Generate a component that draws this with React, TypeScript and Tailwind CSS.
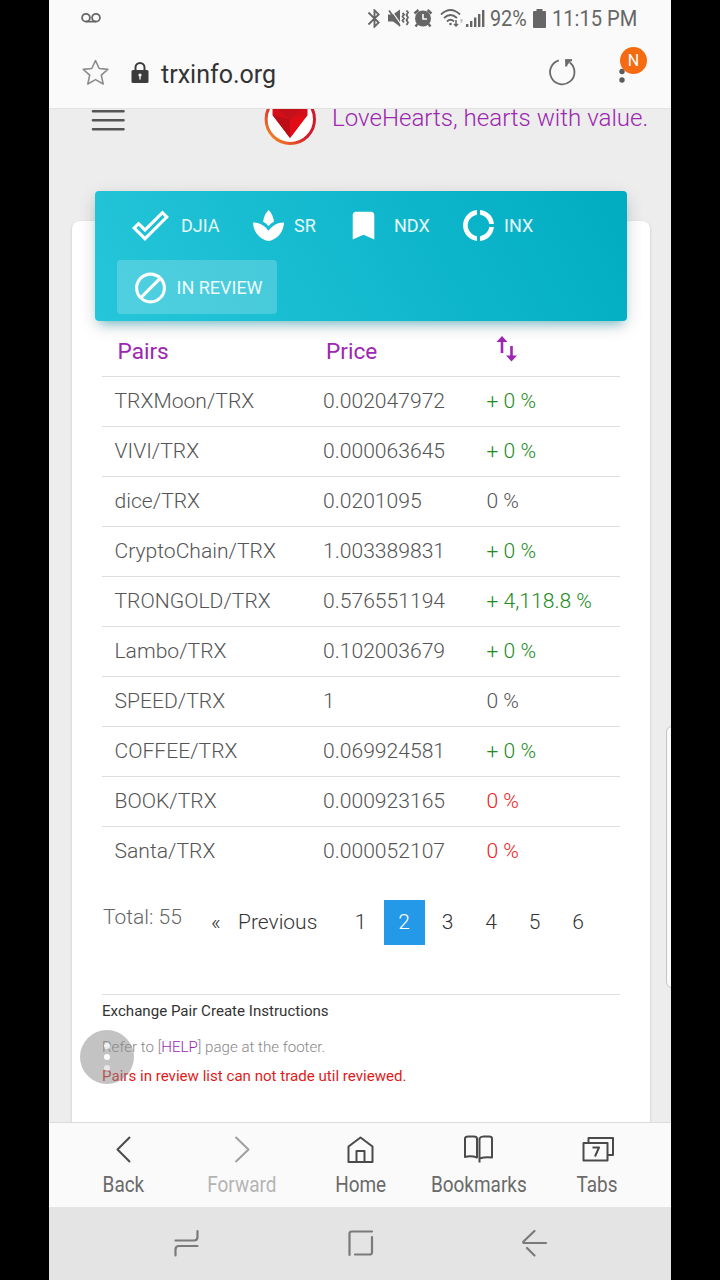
import type { ReactNode } from "react";
import clsx from "clsx";
import { MdBluetooth, MdBookmark, MdDonutLarge, MdDoneOutline, MdSpa } from "react-icons/md";

const pairs = [
    { name: "TRXMoon/TRX", price: "0.002047972", change: "+ 0 %", trend: "up" },
    { name: "VIVI/TRX", price: "0.000063645", change: "+ 0 %", trend: "up" },
    { name: "dice/TRX", price: "0.0201095", change: "0 %", trend: "flat" },
    { name: "CryptoChain/TRX", price: "1.003389831", change: "+ 0 %", trend: "up" },
    { name: "TRONGOLD/TRX", price: "0.576551194", change: "+ 4,118.8 %", trend: "up" },
    { name: "Lambo/TRX", price: "0.102003679", change: "+ 0 %", trend: "up" },
    { name: "SPEED/TRX", price: "1", change: "0 %", trend: "flat" },
    { name: "COFFEE/TRX", price: "0.069924581", change: "+ 0 %", trend: "up" },
    { name: "BOOK/TRX", price: "0.000923165", change: "0 %", trend: "down" },
    { name: "Santa/TRX", price: "0.000052107", change: "0 %", trend: "down" },
];

function StatusBar() {
    return (
        <div className="flex h-9 items-center pl-[32px] pr-[33px] text-[#666]">
            <svg width="20" height="12" viewBox="0 0 20 12" fill="none" stroke="currentColor" strokeWidth="1.8">
                <circle cx="5" cy="5.7" r="3.9" />
                <circle cx="15" cy="5.7" r="3.9" />
                <path d="M5 9.6h10" />
            </svg>
            <div className="ml-auto flex items-center">
                <MdBluetooth className="h-[23px] w-[23px] stroke-current" />
                <svg className="ml-[2px]" width="21" height="20" viewBox="0 0 21 20" fill="currentColor">
                    <path d="M0 6.500h5L12 1.500v17l-7-5H0z" />
                    <path d="M3 2l10.500 15" stroke="#fafafa" strokeWidth="1.3" />
                    <path d="M1 2.500l11 15.500" stroke="currentColor" strokeWidth="1.6" />
                    <path
                        d="M14.500 5l1.500 1.500-1.500 2 1.500 2-1.500 2 1.500 2M18.500 2.500l1.500 2-1.500 2.500 1.500 2.500-1.500 2.500 1.500 2.500-1.500 2.500"
                        fill="none"
                        stroke="currentColor"
                        strokeWidth="1.8"
                    />
                </svg>
                <svg className="ml-[4px]" width="20" height="20" viewBox="0 0 20 20">
                    <circle cx="10" cy="10.5" r="8" fill="currentColor" />
                    <path d="M1.500 5.500l4-3.500M18.500 5.500l-4-3.500M4.500 16l-2 2.500M15.500 16l2 2.500" stroke="currentColor" strokeWidth="2.4" />
                    <path d="M10 6v5h4" fill="none" stroke="#fafafa" strokeWidth="1.6" />
                </svg>
                <svg className="ml-[7px]" width="24" height="20" viewBox="0 0 24 20" fill="none" stroke="currentColor" strokeWidth="1.8">
                    <path d="M1 6.500q9.500-9 19 0M4 10q6.500-6 13 0M7 13.500q3.500-3.500 7 0" />
                    <circle cx="10.5" cy="16" r="1.3" fill="currentColor" stroke="none" />
                    <path d="M16 12v6M14 16l2 2 2-2" strokeWidth="1.5" />
                    <path d="M21.500 15v-4M20 12.500h3" opacity=".35" strokeWidth="1.3" />
                </svg>
                <svg className="ml-[1px]" width="20" height="20" viewBox="0 0 20 20" fill="currentColor">
                    <path d="M1 16h2.400v3H1zM5 13h2.400v6H5zM9 9.500h2.400V19H9zM13 6h2.400v13H13zM17 2h2.400v17H17z" />
                </svg>
                <span className="ml-[5px] w-[38px] pt-px">
                    <span className="inline-block origin-left scale-x-[0.92] text-[21.5px] leading-9">92%</span>
                </span>
                <svg className="ml-[5px]" width="13" height="19" viewBox="0 0 13 19" fill="currentColor">
                    <path d="M3.500 0h6v2H12q1 0 1 1v15q0 1-1 1H1q-1 0-1-1V3q0-1 1-1h2.500z" />
                </svg>
                <span className="ml-[6px] w-[86px] whitespace-nowrap pt-px">
                    <span className="inline-block origin-left scale-x-[0.935] text-[21.5px] leading-9">11:15 PM</span>
                </span>
            </div>
        </div>
    );
}

function AddressBar() {
    return (
        <div className="flex h-[73px] items-center border-b border-[#e2e2e2] pl-[33px] pr-[22px]">
            <svg width="27" height="27" viewBox="0 0 27 27" fill="none" stroke="#8c8c8c" strokeWidth="1.6" strokeLinejoin="round">
                <path d="M13.5 1.500l3.700 8 8.600.9-6.500 5.800 1.900 8.800-7.700-4.400-7.700 4.400 1.900-8.800-6.500-5.800 8.600-.9z" />
            </svg>
            <svg className="ml-[22px] mt-[2px]" width="18" height="22" viewBox="0 0 18 22">
                <rect x="0.5" y="8" width="17" height="13" rx="1.5" fill="#3c3c3c" />
                <path d="M4.500 9V5.500a4.500 4.500 0 0 1 9 0V9" fill="none" stroke="#3c3c3c" strokeWidth="2" />
                <circle cx="9" cy="13" r="1.6" fill="#fafafa" />
                <path d="M9 13v4.500" stroke="#fafafa" strokeWidth="1.3" />
            </svg>
            <span className="ml-[12px] mt-[5px] text-[25px] text-[#333]">trxinfo.org</span>
            <svg className="ml-auto" width="28" height="28" viewBox="0 0 28 28" fill="none" stroke="#6a6a6a" strokeWidth="1.8">
                <path d="M10.800 2.400a12.200 12.200 0 1 0 11 2.100" />
                <path d="M17 2.200h7M18.200 2v6.500" strokeWidth="2" />
                <path d="M18 1.500h6l-6 7z" fill="#6a6a6a" stroke="none" />
            </svg>
            <div className="relative ml-[40px] h-[52px] w-[33px]">
                <svg className="absolute left-[3px] top-[17px]" width="6" height="20" viewBox="0 0 6 20" fill="#5c5c5c">
                    <circle cx="3" cy="8.5" r="2.7" />
                    <circle cx="3" cy="17" r="2.7" />
                </svg>
                <span className="absolute left-[4px] top-[1px] flex h-[27px] w-[27px] items-center justify-center rounded-full bg-[#f56b12] text-[16px] text-white">
                    N
                </span>
            </div>
        </div>
    );
}

function SiteHeader() {
    return (
        <div className="flex h-[81px] items-start pl-[42px]">
            <svg width="34" height="24" viewBox="0 0 34 24" stroke="#555" strokeWidth="2.6" strokeLinecap="round">
                <path d="M2 2.200h30.500M2 11.200h30.500M2 20.200h30.500" />
            </svg>
            <svg className="ml-[139px]" width="52" height="37" viewBox="0 0 52 37">
                <defs>
                    <linearGradient id="ring" x1="0" y1="1" x2="0.5" y2="0.5">
                        <stop offset="0" stopColor="#f7a21b" />
                        <stop offset="0.5" stopColor="#e8562a" />
                        <stop offset="1" stopColor="#cf1b2b" />
                    </linearGradient>
                </defs>
                <circle cx="26.3" cy="10.3" r="24.2" fill="#fff" stroke="url(#ring)" strokeWidth="3" />
                <path d="M8.500 0h35v6L26 29 8.500 6z" fill="#d3101a" />
                <path d="M8.500 6L26 10.500V29z" fill="#bd0d17" />
                <path d="M43.500 6L26 10.500V29z" fill="#e30b16" />
                <path d="M14 0h24l-12 10.500z" fill="#c4101b" />
            </svg>
            <span className="ml-[16px] whitespace-nowrap text-[24.1px] font-light leading-[18px] text-[#9c27b0]">
                LoveHearts, hearts with value.
            </span>
        </div>
    );
}

function Tab({ icon, label, className }: { icon: ReactNode; label: string; className?: string }) {
    return (
        <div className={clsx("flex h-[54px] items-center rounded-[4px] px-[15px] text-[18px] text-white", className)}>
            {icon}
            <span className="text-white/90">{label}</span>
        </div>
    );
}

function MarketTabs() {
    return (
        <div className="relative mx-[23px] -mt-[30px] h-[130px] rounded-[4px] bg-[linear-gradient(60deg,#26c6da,#00acc1)] px-[22px] pt-[7px] shadow-[0_5px_18px_rgba(0,0,0,0.14),0_7px_10px_-5px_rgba(0,172,193,0.5)]">
            <div className="flex">
                <Tab label="DJIA" className="w-[118px] gap-[12px]" icon={<MdDoneOutline className="size-[37px] shrink-0" />} />
                <Tab label="SR" className="w-[95px] gap-[7px]" icon={<MdSpa className="size-[37px] shrink-0" />} />
                <Tab label="NDX" className="w-[115px] gap-[12px]" icon={<MdBookmark className="size-[37px] shrink-0" />} />
                <Tab label="INX" className="gap-[7px]" icon={<MdDonutLarge className="size-[37px] shrink-0" />} />
            </div>
            <Tab
                label="IN REVIEW"
                className="mt-[8px] w-[160px] gap-[7.5px] whitespace-nowrap bg-white/20"
                icon={
                    <svg className="size-[37px] shrink-0" viewBox="0 0 24 24" fill="none" stroke="currentColor" strokeWidth="2">
                        <circle cx="12" cy="12.3" r="9" />
                        <path d="M5.600 18.700L18.400 5.900" />
                    </svg>
                }
            />
        </div>
    );
}

function PairsTable() {
    return (
        <div className="mx-[30px] text-[21.1px] font-light">
            <div className="grid h-[56px] grid-cols-[208.5px_164px_1fr] items-center border-b border-[#dedede] pl-[15.5px] pt-[7px] text-[22.6px] font-normal text-[#9c27b0]">
                <span>Pairs</span>
                <span>Price</span>
                <svg className="ml-[6px] mt-[-7px]" width="22" height="28" viewBox="0 0 22 28" fill="none" stroke="#9c27b0" strokeWidth="2.6">
                    <path d="M6 18V3M15.500 11v13" />
                    <path d="M0.500 7L6 1l5.500 6zM10 20.500l5.500 6 5.500-6z" fill="#9c27b0" stroke="none" />
                </svg>
            </div>
            {pairs.map((pair, i) => (
                <div
                    key={pair.name}
                    className={clsx(
                        "grid h-[50px] grid-cols-[208.5px_163.5px_1fr] items-center border-b pb-[2px] pl-[12.5px] text-[#555]",
                        i < pairs.length - 1 ? "border-[#dedede]" : "border-transparent"
                    )}
                >
                    <span>{pair.name}</span>
                    <span>{pair.price}</span>
                    <span
                        className={clsx(
                            pair.trend === "up" && "text-[#228b22]",
                            pair.trend === "down" && "text-[#f02020]"
                        )}
                    >
                        {pair.change}
                    </span>
                </div>
            ))}
        </div>
    );
}

function Pagination() {
    return (
        <div className="ml-[31px] mt-[23px] flex h-[45px] items-center text-[21px] font-light text-[#333]">
            <span className="mb-[10px] w-[108px] text-[#666]">Total: 55</span>
            <span className="w-[27px]">«</span>
            <span className="w-[102px]">Previous</span>
            {["1", "2", "3", "4", "5", "6"].map((page) => (
                <span
                    key={page}
                    className={clsx(
                        "mr-[2.5px] flex h-full w-[41px] items-center justify-center",
                        page === "2" && "bg-[#2499e8] text-white"
                    )}
                >
                    {page}
                </span>
            ))}
        </div>
    );
}

function Instructions() {
    return (
        <div className="mx-[30px] mt-[49px] border-t border-[#dedede] text-[15.1px]">
            <p className="pt-[6px] leading-[20px] text-[#333]">Exchange Pair Create Instructions</p>
            <p className="pt-[16px] font-light leading-[20px] text-[#888]">
                Refer to [<span className="text-[#9c27b0]">HELP</span>] page at the footer.
            </p>
            <p className="pt-[9px] leading-[20px] text-[#e01b1b]">Pairs in review list can not trade util reviewed.</p>
        </div>
    );
}

const browserActions = [
    {
        label: "Back",
        icon: <path d="M23 4L10.500 16.500 23 29" />,
    },
    {
        label: "Forward",
        icon: <path d="M10.500 4L23.500 16.500 10.500 29" />,
    },
    {
        label: "Home",
        icon: <path d="M4.500 29V13.500L16.500 4.500l12 9V29zM12.500 29V18h8v11" />,
    },
    {
        label: "Bookmarks",
        icon: (
            <path d="M17.500 29.500V5.500q1-2 4-2H27q3 0 3 2v19q-6.500-1-12.500 1M15 5.500v19q-6-2-12-.500V5.500q0-2 3.500-2H11.500Q15 3.500 15 5.500z" />
        ),
    },
    {
        label: "Tabs",
        icon: (
            <>
                <path d="M2.500 10h24V27.500H2.500zM7.500 10V5H32v17H26.500" />
                <path d="M11.500 14.500h6.500L14 23.500" />
            </>
        ),
    },
];

function BrowserNav() {
    return (
        <div className="flex h-[85px] justify-center border-t border-[#dcdcdc] bg-[#fafafa] pl-px text-[#6a6a6a]">
            {browserActions.map((action) => (
                <div
                    key={action.label}
                    className={clsx("flex w-[118.5px] flex-col items-center pt-[10px]", action.label === "Forward" && "text-[#b4b4b4]")}
                >
                    <svg
                        className={action.label === "Forward" ? "text-[#a0a0a0]" : "text-[#4a4a4a]"}
                        width="34"
                        height="32"
                        viewBox="0 0 34 32"
                        fill="none"
                        stroke="currentColor"
                        strokeWidth="2"
                        strokeLinejoin="round"
                    >
                        {action.icon}
                    </svg>
                    <span className="scale-x-[0.89] text-[21.3px] leading-[40px]">{action.label}</span>
                </div>
            ))}
        </div>
    );
}

function SystemNav() {
    return (
        <div className="flex h-[73px] items-center bg-[#e4e4e4] pb-px pl-[125px]">
            <svg width="26" height="28" viewBox="0 0 26 28" fill="none" stroke="#7a7a7a" strokeWidth="2.2" strokeLinecap="round">
                <path d="M1.500 11.500H20q3.500 0 3.500-3.500V2M23.500 17H5q-3.500 0-3.500 3.500v6" />
            </svg>
            <svg className="ml-[147.5px]" width="26" height="28" viewBox="0 0 26 28" fill="none" stroke="#7a7a7a" strokeWidth="2.2" strokeLinecap="round">
                <path d="M1.500 26V4.500Q1.500 2.500 4 2.500h20M24 8v15.500q0 2-2.500 2H7" />
            </svg>
            <svg className="ml-[148px]" width="26" height="28" viewBox="0 0 26 28" fill="none" stroke="#7a7a7a" strokeWidth="2.2" strokeLinecap="round" strokeLinejoin="round">
                <path d="M12.500 2L1.500 12.500q-.8 1.500 1 1.500H24M5 19l7.500 7.500" />
            </svg>
        </div>
    );
}

export default function App() {
    return (
        <div className="h-[1280px] w-[720px] overflow-hidden bg-black pl-[49px] font-[Roboto,sans-serif]">
            <div className="flex h-full w-[622px] flex-col bg-[#fafafa]">
                <StatusBar />
                <AddressBar />
                <div className="relative h-[1013px] overflow-hidden bg-[#ededed]">
                    <SiteHeader />
                    <div className="ml-[23px] mr-[21px] mt-[31px] flow-root h-[920px] rounded-[8px] bg-white shadow-[0_1px_3px_rgba(0,0,0,0.18)]">
                        <MarketTabs />
                        <PairsTable />
                        <Pagination />
                        <Instructions />
                    </div>
                    {/* floating assistant button */}
                    <div className="absolute left-[31px] top-[921px] flex size-[54px] flex-col items-center justify-center gap-[5px] rounded-full bg-[#888]/50">
                        <span className="size-[6px] rounded-full bg-white/80" />
                        <span className="size-[6px] rounded-full bg-white" />
                        <span className="size-[6px] rounded-full bg-white/60" />
                    </div>
                    {/* edge panel handle */}
                    <div className="absolute -right-[4px] top-[617px] h-[262px] w-[9px] rounded-l-[6px] border border-[#c4c4c4] bg-[#fafafa]" />
                </div>
                <BrowserNav />
                <SystemNav />
            </div>
        </div>
    );
}
